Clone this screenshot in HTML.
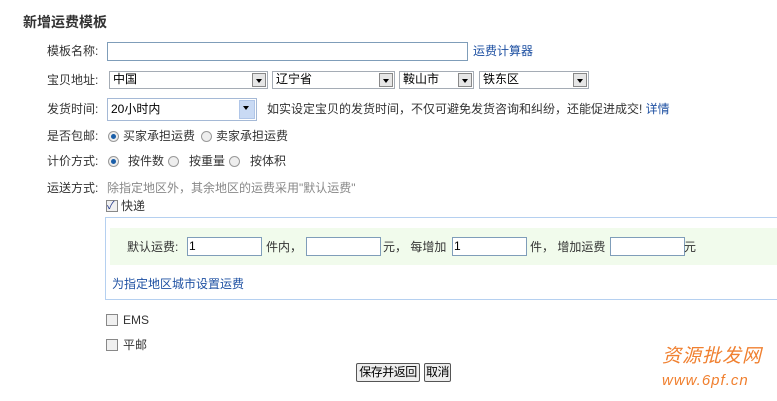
<!DOCTYPE html>
<html><head><meta charset="utf-8"><style>
body{margin:0;width:777px;height:401px;background:#fff;position:relative;overflow:hidden;font-family:"Liberation Sans","Noto Sans CJK SC",sans-serif;font-size:12px;color:#333}
.a{position:absolute;white-space:nowrap;line-height:14px}
.lbl{left:47px}
.inp{position:absolute;border:1px solid #7f9db9;background:#fff;box-sizing:border-box}
.sel{position:absolute;border:1px solid #a5acb5;background:#fff;box-sizing:border-box;height:18px;font-size:12px;line-height:15px;padding-left:3px;color:#000}
.sel i{position:absolute;right:1px;top:1px;width:14px;height:14px;background:#e6e6e6;border:1px solid #888;box-sizing:border-box}
.sel i:after{content:"";position:absolute;left:3px;top:5px;border:3px solid transparent;border-top:4px solid #000}
.rad{position:absolute;width:11px;height:11px;border-radius:50%;border:1px solid #999;background:#eee;box-sizing:border-box}
.rad.on:after{content:"";position:absolute;left:2px;top:2px;width:5px;height:5px;border-radius:50%;background:#1a5ea8}
.cb{position:absolute;width:12px;height:12px;border:1px solid #888;background:#f0f0f0;box-sizing:border-box}
a,.blue{color:#1e50a2;text-decoration:none}
.btn{position:absolute;border:1px solid #555;border-radius:2px;background:#eee;height:19px;box-sizing:border-box;font-size:12px;line-height:17px;padding:0;color:#000;white-space:nowrap;text-align:center;letter-spacing:-0.5px}
</style></head><body>
<div class="a" style="left:23px;top:15px;font-size:14px;font-weight:bold;color:#333">新增运费模板</div>

<div class="a lbl" style="top:44px">模板名称:</div>
<div class="inp" style="left:107px;top:42px;width:361px;height:19px"></div>
<div class="a blue" style="left:473px;top:44px">运费计算器</div>

<div class="a lbl" style="top:73px">宝贝地址:</div>
<div class="sel" style="left:109px;top:71px;width:159px">中国<i></i></div>
<div class="sel" style="left:272px;top:71px;width:123px">辽宁省<i></i></div>
<div class="sel" style="left:399px;top:71px;width:75px">鞍山市<i></i></div>
<div class="sel" style="left:479px;top:71px;width:110px">铁东区<i></i></div>

<div class="a lbl" style="top:102px">发货时间:</div>
<div class="sel" style="left:107px;top:98px;width:150px;height:23px;line-height:20px;border-color:#a5b9d6">20小时内<i style="top:1px;width:16px;height:19px;background:#c9daf4;border-color:#b0c6e8"></i></div>
<div class="a" style="left:267px;top:102px">如实设定宝贝的发货时间，不仅可避免发货咨询和纠纷，还能促进成交! <span class="blue">详情</span></div>

<div class="a lbl" style="top:129px">是否包邮:</div>
<div class="rad on" style="left:108px;top:131px"></div><div class="a" style="left:123px;top:129px">买家承担运费</div>
<div class="rad" style="left:201px;top:131px"></div><div class="a" style="left:216px;top:129px">卖家承担运费</div>

<div class="a lbl" style="top:154px">计价方式:</div>
<div class="rad on" style="left:108px;top:156px"></div><div class="a" style="left:128px;top:154px">按件数</div>
<div class="rad" style="left:168px;top:156px"></div><div class="a" style="left:189px;top:154px">按重量</div>
<div class="rad" style="left:229px;top:156px"></div><div class="a" style="left:250px;top:154px">按体积</div>

<div class="a lbl" style="top:181px">运送方式:</div>
<div class="a" style="left:107px;top:181px;color:#888">除指定地区外，其余地区的运费采用"默认运费"</div>

<div class="cb" style="left:106px;top:200px"><span style="position:absolute;left:0;top:-4px;font-size:11px;color:#2a3f8f">✓</span></div>
<div class="a" style="left:121px;top:199px">快递</div>

<div style="position:absolute;left:105px;top:217px;width:680px;height:83px;border:1px solid #b5d0f0;box-sizing:border-box"></div>
<div style="position:absolute;left:110px;top:228px;width:667px;height:37px;background:#f1fbec"></div>
<div class="a" style="left:127px;top:240px">默认运费:</div>
<div class="inp" style="left:187px;top:237px;width:75px;height:19px;line-height:16px;padding-left:1px;color:#000">1</div>
<div class="a" style="left:266px;top:240px">件内，</div>
<div class="inp" style="left:306px;top:237px;width:75px;height:19px"></div>
<div class="a" style="left:383px;top:240px">元，&nbsp;每增加</div>
<div class="inp" style="left:452px;top:237px;width:75px;height:19px;line-height:16px;padding-left:1px;color:#000">1</div>
<div class="a" style="left:530px;top:240px">件，&nbsp;增加运费</div>
<div class="inp" style="left:610px;top:237px;width:75px;height:19px"></div>
<div class="a" style="left:684px;top:240px">元</div>
<div class="a blue" style="left:112px;top:277px">为指定地区城市设置运费</div>

<div class="cb" style="left:106px;top:314px"></div><div class="a" style="left:123px;top:313px">EMS</div>
<div class="cb" style="left:106px;top:339px"></div><div class="a" style="left:123px;top:338px">平邮</div>

<div class="btn" style="left:356px;top:363px;width:64px">保存并返回</div>
<div class="btn" style="left:424px;top:363px;width:27px">取消</div>

<div class="a" style="left:662px;top:346px;font-size:19px;line-height:22px;color:#f08030;font-style:italic;letter-spacing:1px">资源批发网</div>
<div class="a" style="left:662px;top:372px;font-size:15px;line-height:18px;color:#f08030;font-style:italic;letter-spacing:1px">www.6pf.cn</div>
</body></html>
